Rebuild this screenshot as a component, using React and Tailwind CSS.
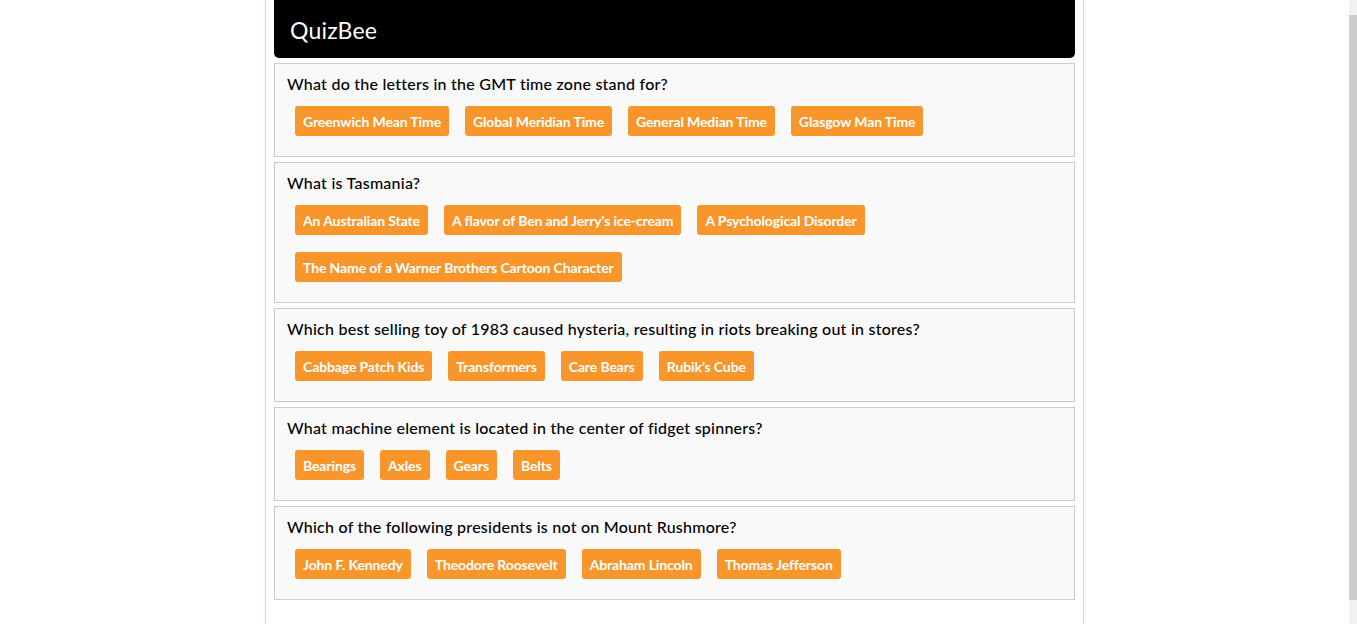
import React from "react";

const questions = [
  {
    q: "What do the letters in the GMT time zone stand for?",
    answers: ["Greenwich Mean Time", "Global Meridian Time", "General Median Time", "Glasgow Man Time"],
  },
  {
    q: "What is Tasmania?",
    answers: [
      "An Australian State",
      "A flavor of Ben and Jerry's ice-cream",
      "A Psychological Disorder",
      "The Name of a Warner Brothers Cartoon Character",
    ],
  },
  {
    q: "Which best selling toy of 1983 caused hysteria, resulting in riots breaking out in stores?",
    answers: ["Cabbage Patch Kids", "Transformers", "Care Bears", "Rubik\u2019s Cube"],
  },
  {
    q: "What machine element is located in the center of fidget spinners?",
    answers: ["Bearings", "Axles", "Gears", "Belts"],
  },
  {
    q: "Which of the following presidents is not on Mount Rushmore?",
    answers: ["John F. Kennedy", "Theodore Roosevelt", "Abraham Lincoln", "Thomas Jefferson"],
  },
];

const QuestionBox = ({ q, answers }) => {
  return (
    <div className="mt-[5px] border border-[#cccccc] bg-[#f9f9f9] px-[12px] pt-[9px] pb-[20px]">
      <div className="text-[16px] leading-[22px] font-medium tracking-[0.24px] text-black">{q}</div>
      <div className="mt-[11px] flex flex-wrap gap-x-[16px] gap-y-[17px] pl-[8px]">
        {answers.map((a) => (
          <button
            key={a}
            className="h-[30px] rounded-[3px] bg-[#f8962b] px-[8px] text-[14px] font-bold text-white tracking-[-0.12px]"
          >
            {a}
          </button>
        ))}
      </div>
    </div>
  );
};

const App = () => {
  return (
    <div className="flex min-h-[624px] bg-white" style={{ fontFamily: "Lato, 'Open Sans', sans-serif" }}>
      <div className="flex-1">
        <div className="mx-auto w-[819px] min-h-[624px] border-x border-[#dddddd] bg-white px-[8px] shadow-[0_0_3px_rgba(0,0,0,0.08)]">
          {/* Header */}
          <div className="flex h-[58px] items-center rounded-b-[5px] bg-black pl-[16px] pt-[2px]">
            <span className="text-[23px] font-normal tracking-[0.2px] text-white">QuizBee</span>
          </div>

          {questions.map((item) => (
            <QuestionBox key={item.q} q={item.q} answers={item.answers} />
          ))}
        </div>
      </div>

      {/* scrollbar strip */}
      <div className="flex w-[8px] flex-col bg-[#f1f1f1]">
        <div className="h-[15px]"></div>
        <div className="flex-1 bg-[#cdcdcd]"></div>
        <div className="h-[24px]"></div>
      </div>
    </div>
  );
};

export default App;
